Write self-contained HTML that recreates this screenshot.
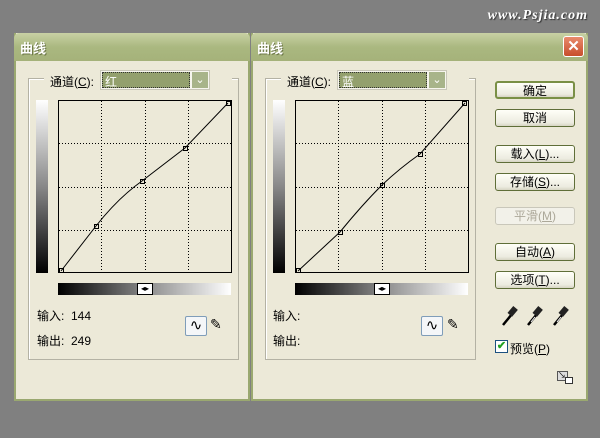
<!DOCTYPE html>
<html><head><meta charset="utf-8"><style>
*{margin:0;padding:0;box-sizing:border-box}
body{width:600px;height:438px;background:#808080;position:relative;overflow:hidden;font-family:"Liberation Sans","Noto Sans CJK SC",sans-serif;font-size:12px;color:#000}
.a{position:absolute}
.dlg{position:absolute;background:#ece9d8;border:2px solid #9aa870;border-top:none}
.title{position:absolute;left:-2px;right:-2px;top:0;height:28px;background:linear-gradient(#c8d1a4,#aab880 50%,#a5b27a);border-radius:5px 5px 0 0;color:#fff;font-weight:bold;font-size:13px;padding:5px 6px;text-shadow:1px 1px 0 #6d7848}
.grp{position:absolute;border:1px solid #b4b2a4;box-shadow:1px 1px 0 #fff inset}
.sel{position:absolute;height:20px;border:1px solid #c9c7b8;background:#f6f5ee}
.sel .v{position:absolute;left:1px;top:1px;right:19px;bottom:1px;background:#93a06d;outline:1px dotted #333;outline-offset:-1px;color:#fff;padding:1px 3px;font-size:12px}
.sel .b{position:absolute;right:1px;top:1px;width:16px;bottom:1px;background:#a8b48a;color:#fff;text-align:center;font-size:11px;line-height:16px}
.btn{position:absolute;left:495px;width:80px;height:18px;border:1px solid #5f6e38;border-radius:3px;background:linear-gradient(#fffff8,#ecebdf 80%,#d6d4c4);text-align:center;font-size:12px;line-height:16px}
.hg{position:absolute;height:12px;background:linear-gradient(90deg,#000,#888 50%,#fff)}
.vg{position:absolute;width:12px;background:linear-gradient(#fff,#888 50%,#000)}
</style></head><body>
<div class="a" style="right:12px;top:8px;color:#fff;font-family:'Liberation Serif',serif;font-style:italic;font-weight:bold;font-size:14px;letter-spacing:1px;text-shadow:1px 1px 1px #333">www.Psjia.com</div>

<div class="dlg" style="left:14px;top:33px;width:236px;height:368px">
<div class="title">曲线</div>
</div>
<div class="dlg" style="left:251px;top:33px;width:337px;height:368px">
<div class="title">曲线</div>
<div class="a" style="right:2px;top:3px;width:21px;height:21px;background:linear-gradient(#e98a6c,#c74e2c);border:1px solid #fff;border-radius:3px;color:#fff;font-weight:bold;text-align:center;line-height:19px;font-size:15px">✕</div>
</div>

<div class="grp" style="left:28px;top:78px;width:211px;height:282px"></div>
<div class="a" style="left:44px;top:72px;width:188px;height:14px;background:#ece9d8"></div>
<div class="a" style="left:50px;top:73px">通道(<u>C</u>):</div>
<div class="sel" style="left:100px;top:70px;width:110px"><div class="v">红</div><div class="b">⌄</div></div>
<div class="vg" style="left:36px;top:100px;height:173px"></div>

<div class="grp" style="left:265px;top:78px;width:211px;height:282px"></div>
<div class="a" style="left:281px;top:72px;width:188px;height:14px;background:#ece9d8"></div>
<div class="a" style="left:287px;top:73px">通道(<u>C</u>):</div>
<div class="sel" style="left:337px;top:70px;width:110px"><div class="v">蓝</div><div class="b">⌄</div></div>
<div class="vg" style="left:273px;top:100px;height:173px"></div>

<svg class="a" style="left:0;top:0;z-index:5" width="600" height="438">
<g fill="none">
<rect x="58.5" y="100.5" width="173" height="172" stroke="#000"/>
<g stroke="#000" stroke-dasharray="1,2">
<line x1="101.5" y1="101" x2="101.5" y2="272"/><line x1="145.5" y1="101" x2="145.5" y2="272"/><line x1="188.5" y1="101" x2="188.5" y2="272"/>
<line x1="59" y1="143.5" x2="231" y2="143.5"/><line x1="59" y1="187.5" x2="231" y2="187.5"/><line x1="59" y1="230.5" x2="231" y2="230.5"/>
</g>
<path d="M61 271 L96 226 Q118 198 142 181 L185 148 L228 103" stroke="#000"/>
<g stroke="#000"><rect x="59.5" y="268.5" width="4" height="4"/><rect x="94.5" y="224.5" width="4" height="4"/><rect x="140.5" y="179.5" width="4" height="4"/><rect x="183.5" y="146.5" width="4" height="4"/><rect x="226.5" y="101.5" width="4" height="4"/></g>

<rect x="295.5" y="100.5" width="173" height="172" stroke="#000"/>
<g stroke="#000" stroke-dasharray="1,2">
<line x1="338.5" y1="101" x2="338.5" y2="272"/><line x1="382.5" y1="101" x2="382.5" y2="272"/><line x1="425.5" y1="101" x2="425.5" y2="272"/>
<line x1="296" y1="143.5" x2="468" y2="143.5"/><line x1="296" y1="187.5" x2="468" y2="187.5"/><line x1="296" y1="230.5" x2="468" y2="230.5"/>
</g>
<path d="M298 271 L340 232 Q362 205 382 185 Q400 168 420 154 L465 103" stroke="#000"/>
<g stroke="#000"><rect x="296.5" y="268.5" width="4" height="4"/><rect x="338.5" y="230.5" width="4" height="4"/><rect x="380.5" y="183.5" width="4" height="4"/><rect x="418.5" y="152.5" width="4" height="4"/><rect x="462.5" y="101.5" width="4" height="4"/></g>
</g>
</svg>

<div class="hg" style="left:58px;top:283px;width:173px"></div>
<div class="a" style="left:137px;top:283px;width:16px;height:12px;background:#fff;border:1px solid #000;font-size:8px;line-height:10px;text-align:center">◂▸</div>
<div class="a" style="left:37px;top:307px">输入: &nbsp;144</div>
<div class="a" style="left:37px;top:332px">输出: &nbsp;249</div>
<div class="a" style="left:185px;top:316px;width:22px;height:20px;border:1px solid #7f9db9;background:#f4f6f8;border-radius:2px;text-align:center;line-height:18px;font-size:15px">∿</div>
<div class="a" style="left:210px;top:316px;font-size:14px">✎</div>

<div class="hg" style="left:295px;top:283px;width:173px"></div>
<div class="a" style="left:374px;top:283px;width:16px;height:12px;background:#fff;border:1px solid #000;font-size:8px;line-height:10px;text-align:center">◂▸</div>
<div class="a" style="left:273px;top:307px">输入:</div>
<div class="a" style="left:273px;top:332px">输出:</div>
<div class="a" style="left:421px;top:316px;width:22px;height:20px;border:1px solid #7f9db9;background:#f4f6f8;border-radius:2px;text-align:center;line-height:18px;font-size:15px">∿</div>
<div class="a" style="left:447px;top:316px;font-size:14px">✎</div>

<div class="btn" style="top:81px;border-width:2px;border-color:#7a9046">确定</div>
<div class="btn" style="top:109px">取消</div>
<div class="btn" style="top:145px">载入(<u>L</u>)...</div>
<div class="btn" style="top:173px">存储(<u>S</u>)...</div>
<div class="btn" style="top:207px;border-color:#c9c7ba;color:#aca899;background:#f2f1e9">平滑(<u>M</u>)</div>
<div class="btn" style="top:243px">自动(<u>A</u>)</div>
<div class="btn" style="top:271px">选项(<u>T</u>)...</div>

<svg class="a" style="left:500px;top:305px" width="75" height="22">
<g stroke="#000" stroke-width="2.5"><line x1="3" y1="20" x2="12" y2="9"/><line x1="28" y1="20" x2="37" y2="9"/><line x1="54" y1="20" x2="63" y2="9"/></g>
<g fill="#222"><rect x="10" y="2" width="6" height="9" transform="rotate(40 13 6)"/><rect x="35" y="2" width="6" height="9" transform="rotate(40 38 6)"/><rect x="61" y="2" width="6" height="9" transform="rotate(40 64 6)"/></g>
<g stroke="#fff" stroke-width="1"><line x1="31" y1="17" x2="35" y2="12"/><line x1="57" y1="17" x2="61" y2="12"/></g>
</svg>
<div class="a" style="left:495px;top:340px;width:13px;height:13px;border:1px solid #1c5180;background:#fff;color:#21a121;font-size:11px;line-height:11px;text-align:center;font-weight:bold">✔</div>
<div class="a" style="left:510px;top:340px">预览(<u>P</u>)</div>
<div class="a" style="left:557px;top:371px;width:11px;height:10px;border:1px solid #555;background:#ddd;font-size:8px;line-height:8px">↘</div>
<div class="a" style="left:565px;top:377px;width:8px;height:7px;border:1px solid #333;background:#fff"></div>
</body></html>
